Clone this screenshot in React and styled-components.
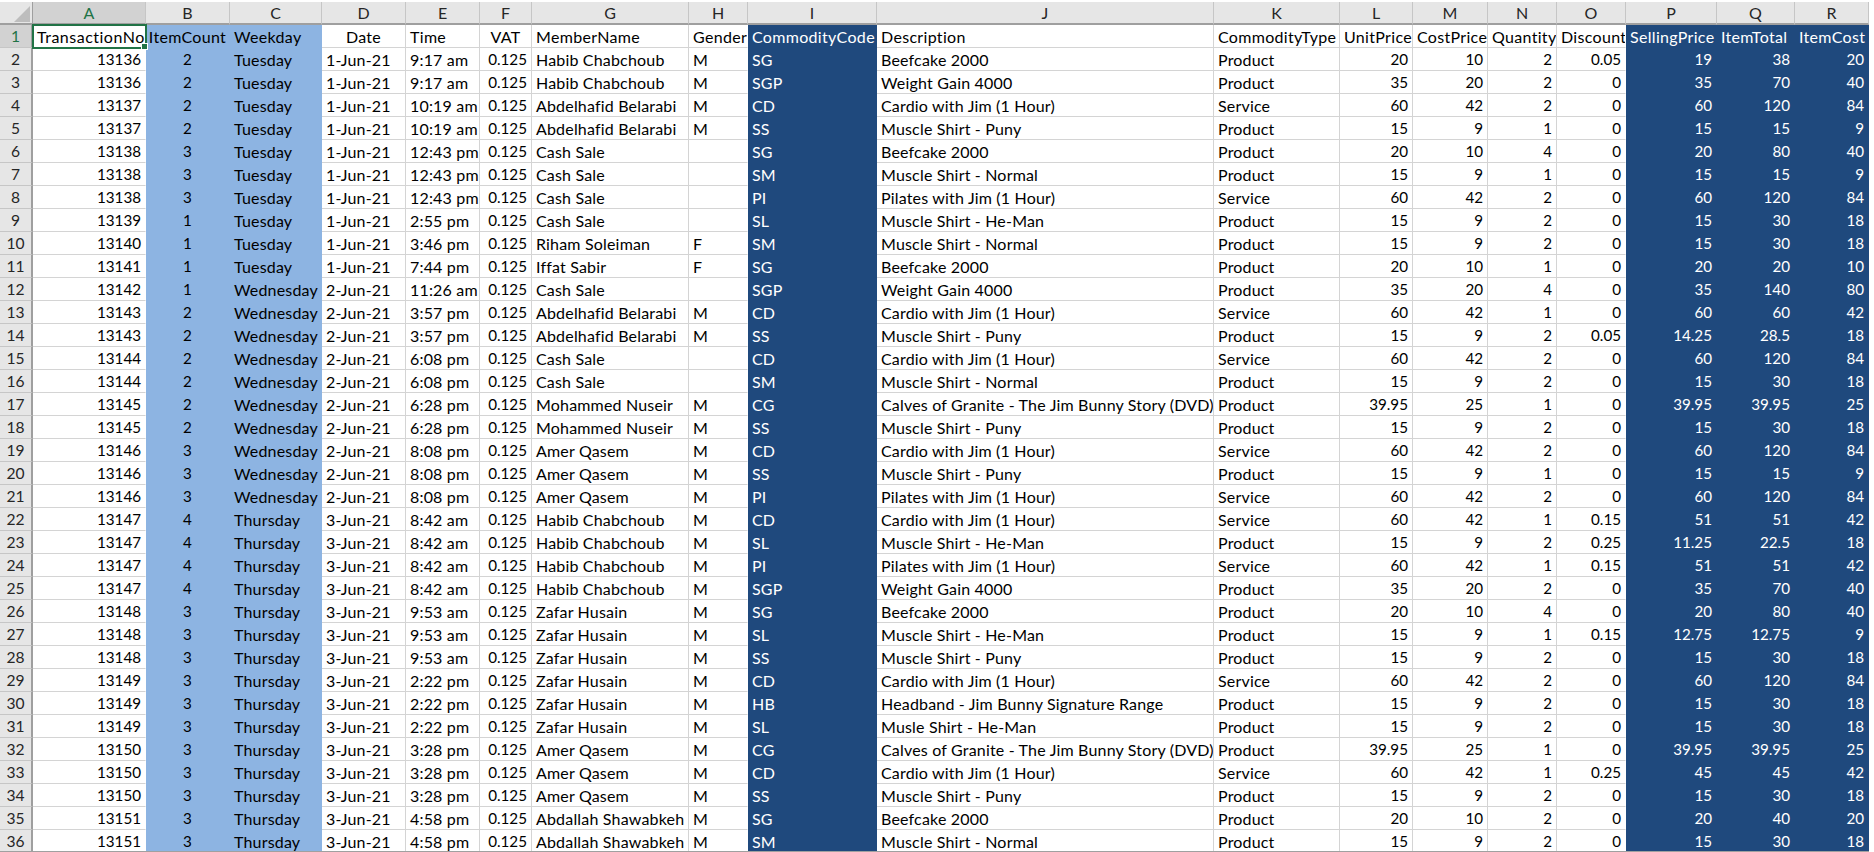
import React from "react";
import styled, { createGlobalStyle } from "styled-components";

const Global = createGlobalStyle`
  html, body { margin: 0; padding: 0; background: #fff; overflow: hidden; }
`;

const GRID = "#d4d4d4";
const DARK = "#1f497d";
const LIGHT = "#8db4e2";

const Sheet = styled.div`
  width: 1869px;
  height: 849px;
  padding-top: 2px;
  overflow: hidden;
  border-bottom: 1px solid #a0a0a0;
`;

const Table = styled.table`
  table-layout: fixed;
  border-collapse: separate;
  border-spacing: 0;
  width: 1869px;
  font-family: Lato, "Liberation Sans", sans-serif;
  font-size: 16px;
  color: #000;
`;

const ColHead = styled.th`
  height: 23px;
  padding: 0;
  box-sizing: border-box;
  font-weight: 400;
  text-align: center;
  background: ${(p) => (p.$active ? "#d2d2d2" : "#e6e6e6")};
  color: ${(p) => (p.$active ? "#217346" : "#262626")};
  border-right: 1px solid #c6c6c6;
  border-bottom: 2px solid #9f9f9f;
  font-size: 16px;
`;

const Corner = styled(ColHead)`
  background: #e6e6e6;
  border-right: 1px solid #9f9f9f;
  line-height: 0;
`;

const CornerMark = styled.svg`
  display: block;
  margin: 3px 0 0 14px;
`;

const RowHead = styled.th`
  height: 23px;
  padding: 0;
  box-sizing: border-box;
  font-weight: 400;
  font-size: 15.6px;
  text-align: center;
  background: ${(p) => (p.$active ? "#d2d2d2" : "#e6e6e6")};
  color: ${(p) => (p.$active ? "#217346" : "#262626")};
  border-right: 2px solid #9f9f9f;
  border-bottom: 1px solid #c6c6c6;
`;

const toneBg = { plain: "#fff", light: LIGHT, dark: DARK };

const Cell = styled.td`
  height: 23px;
  padding: 0 ${(p) => (p.$align === "right" ? "4px" : "0")} 0 ${(p) => (p.$align === "left" ? "4px" : "0")};
  box-sizing: border-box;
  white-space: nowrap;
  overflow: hidden;
  text-align: ${(p) => p.$align};
  font-size: ${(p) => (p.$numeric ? "15.2px" : "16px")};
  letter-spacing: ${(p) => (p.$numeric ? "0" : p.$title ? "0.32px" : "0.18px")};
  background: ${(p) => toneBg[p.$tone]};
  color: ${(p) => (p.$tone === "dark" ? "#fff" : "#000")};
  border-right: 1px solid ${(p) => (p.$tone === "plain" && !p.$noRule ? GRID : "transparent")};
  border-bottom: 1px solid ${(p) => (p.$tone === "plain" ? GRID : "transparent")};
`;

const SelectedCell = styled(Cell)`
  position: relative;
  overflow: visible;
  letter-spacing: 0.5px;
  &::before {
    content: "";
    position: absolute;
    left: -1px;
    top: -1px;
    right: -2px;
    bottom: -2px;
    border: 2px solid #217346;
    z-index: 2;
  }
  &::after {
    content: "";
    position: absolute;
    right: -3px;
    bottom: -3px;
    width: 5px;
    height: 5px;
    background: #217346;
    border: 1px solid #fff;
    z-index: 3;
  }
`;

const columns = [
  { letter: "A", name: "TransactionNo", width: 113, align: "right", headAlign: "left", tone: "plain", noRule: true },
  { letter: "B", name: "ItemCount", width: 84, align: "center", headAlign: "center", tone: "light" },
  { letter: "C", name: "Weekday", width: 92, align: "left", headAlign: "left", tone: "light" },
  { letter: "D", name: "Date", width: 84, align: "left", headAlign: "center", tone: "plain" },
  { letter: "E", name: "Time", width: 74, align: "left", headAlign: "left", tone: "plain" },
  { letter: "F", name: "VAT", width: 52, align: "right", headAlign: "center", tone: "plain" },
  { letter: "G", name: "MemberName", width: 157, align: "left", headAlign: "left", tone: "plain" },
  { letter: "H", name: "Gender", width: 59, align: "left", headAlign: "left", tone: "plain", noRule: true },
  { letter: "I", name: "CommodityCode", width: 129, align: "left", headAlign: "left", tone: "dark" },
  { letter: "J", name: "Description", width: 337, align: "left", headAlign: "left", tone: "plain" },
  { letter: "K", name: "CommodityType", width: 126, align: "left", headAlign: "left", tone: "plain" },
  { letter: "L", name: "UnitPrice", width: 73, align: "right", headAlign: "left", tone: "plain" },
  { letter: "M", name: "CostPrice", width: 75, align: "right", headAlign: "left", tone: "plain" },
  { letter: "N", name: "Quantity", width: 69, align: "right", headAlign: "left", tone: "plain" },
  { letter: "O", name: "Discount", width: 69, align: "right", headAlign: "left", tone: "plain", noRule: true },
  { letter: "P", name: "SellingPrice", width: 91, align: "right", headAlign: "left", tone: "dark" },
  { letter: "Q", name: "ItemTotal", width: 78, align: "right", headAlign: "left", tone: "dark" },
  { letter: "R", name: "ItemCost", width: 74, align: "right", headAlign: "left", tone: "dark" },
];

const DESC = {
  SG: ["Beefcake 2000", "Product"],
  SGP: ["Weight Gain 4000", "Product"],
  CD: ["Cardio with Jim (1 Hour)", "Service"],
  SS: ["Muscle Shirt - Puny", "Product"],
  SM: ["Muscle Shirt - Normal", "Product"],
  PI: ["Pilates with Jim (1 Hour)", "Service"],
  SL: ["Muscle Shirt - He-Man", "Product"],
  CG: ["Calves of Granite - The Jim Bunny Story (DVD)", "Product"],
  HB: ["Headband - Jim Bunny Signature Range", "Product"],
};

const DAYS = {
  1: ["Tuesday", "1-Jun-21"],
  2: ["Wednesday", "2-Jun-21"],
  3: ["Thursday", "3-Jun-21"],
};

// no, count, day, time, member, gender, code, unit, cost, qty, discount, selling, total, itemCost
const source = [
  [13136, 2, 1, "9:17 am", "Habib Chabchoub", "M", "SG", 20, 10, 2, 0.05, 19, 38, 20],
  [13136, 2, 1, "9:17 am", "Habib Chabchoub", "M", "SGP", 35, 20, 2, 0, 35, 70, 40],
  [13137, 2, 1, "10:19 am", "Abdelhafid Belarabi", "M", "CD", 60, 42, 2, 0, 60, 120, 84],
  [13137, 2, 1, "10:19 am", "Abdelhafid Belarabi", "M", "SS", 15, 9, 1, 0, 15, 15, 9],
  [13138, 3, 1, "12:43 pm", "Cash Sale", "", "SG", 20, 10, 4, 0, 20, 80, 40],
  [13138, 3, 1, "12:43 pm", "Cash Sale", "", "SM", 15, 9, 1, 0, 15, 15, 9],
  [13138, 3, 1, "12:43 pm", "Cash Sale", "", "PI", 60, 42, 2, 0, 60, 120, 84],
  [13139, 1, 1, "2:55 pm", "Cash Sale", "", "SL", 15, 9, 2, 0, 15, 30, 18],
  [13140, 1, 1, "3:46 pm", "Riham Soleiman", "F", "SM", 15, 9, 2, 0, 15, 30, 18],
  [13141, 1, 1, "7:44 pm", "Iffat Sabir", "F", "SG", 20, 10, 1, 0, 20, 20, 10],
  [13142, 1, 2, "11:26 am", "Cash Sale", "", "SGP", 35, 20, 4, 0, 35, 140, 80],
  [13143, 2, 2, "3:57 pm", "Abdelhafid Belarabi", "M", "CD", 60, 42, 1, 0, 60, 60, 42],
  [13143, 2, 2, "3:57 pm", "Abdelhafid Belarabi", "M", "SS", 15, 9, 2, 0.05, 14.25, 28.5, 18],
  [13144, 2, 2, "6:08 pm", "Cash Sale", "", "CD", 60, 42, 2, 0, 60, 120, 84],
  [13144, 2, 2, "6:08 pm", "Cash Sale", "", "SM", 15, 9, 2, 0, 15, 30, 18],
  [13145, 2, 2, "6:28 pm", "Mohammed Nuseir", "M", "CG", 39.95, 25, 1, 0, 39.95, 39.95, 25],
  [13145, 2, 2, "6:28 pm", "Mohammed Nuseir", "M", "SS", 15, 9, 2, 0, 15, 30, 18],
  [13146, 3, 2, "8:08 pm", "Amer Qasem", "M", "CD", 60, 42, 2, 0, 60, 120, 84],
  [13146, 3, 2, "8:08 pm", "Amer Qasem", "M", "SS", 15, 9, 1, 0, 15, 15, 9],
  [13146, 3, 2, "8:08 pm", "Amer Qasem", "M", "PI", 60, 42, 2, 0, 60, 120, 84],
  [13147, 4, 3, "8:42 am", "Habib Chabchoub", "M", "CD", 60, 42, 1, 0.15, 51, 51, 42],
  [13147, 4, 3, "8:42 am", "Habib Chabchoub", "M", "SL", 15, 9, 2, 0.25, 11.25, 22.5, 18],
  [13147, 4, 3, "8:42 am", "Habib Chabchoub", "M", "PI", 60, 42, 1, 0.15, 51, 51, 42],
  [13147, 4, 3, "8:42 am", "Habib Chabchoub", "M", "SGP", 35, 20, 2, 0, 35, 70, 40],
  [13148, 3, 3, "9:53 am", "Zafar Husain", "M", "SG", 20, 10, 4, 0, 20, 80, 40],
  [13148, 3, 3, "9:53 am", "Zafar Husain", "M", "SL", 15, 9, 1, 0.15, 12.75, 12.75, 9],
  [13148, 3, 3, "9:53 am", "Zafar Husain", "M", "SS", 15, 9, 2, 0, 15, 30, 18],
  [13149, 3, 3, "2:22 pm", "Zafar Husain", "M", "CD", 60, 42, 2, 0, 60, 120, 84],
  [13149, 3, 3, "2:22 pm", "Zafar Husain", "M", "HB", 15, 9, 2, 0, 15, 30, 18],
  [13149, 3, 3, "2:22 pm", "Zafar Husain", "M", "SL", 15, 9, 2, 0, 15, 30, 18, "Musle Shirt - He-Man"],
  [13150, 3, 3, "3:28 pm", "Amer Qasem", "M", "CG", 39.95, 25, 1, 0, 39.95, 39.95, 25],
  [13150, 3, 3, "3:28 pm", "Amer Qasem", "M", "CD", 60, 42, 1, 0.25, 45, 45, 42],
  [13150, 3, 3, "3:28 pm", "Amer Qasem", "M", "SS", 15, 9, 2, 0, 15, 30, 18],
  [13151, 3, 3, "4:58 pm", "Abdallah Shawabkeh", "M", "SG", 20, 10, 2, 0, 20, 40, 20],
  [13151, 3, 3, "4:58 pm", "Abdallah Shawabkeh", "M", "SM", 15, 9, 2, 0, 15, 30, 18],
];

const toRow = ([no, count, day, time, member, gender, code, unit, cost, qty, disc, sell, total, itemCost, descOverride]) => [
  no, count, DAYS[day][0], DAYS[day][1], time, 0.125, member, gender, code,
  descOverride || DESC[code][0], DESC[code][1], unit, cost, qty, disc, sell, total, itemCost,
];

export default function App() {
  return (
    <Sheet>
      <Global />
      <Table>
        <colgroup>
          <col width="33" />
          {columns.map((c) => (
            <col key={c.letter} width={c.width} />
          ))}
        </colgroup>
        <thead>
          <tr>
            <Corner>
              <CornerMark width="16" height="16" viewBox="0 0 16 16">
                <polygon points="0,16 16,16 16,0" fill="#bdbdbd" />
              </CornerMark>
            </Corner>
            {columns.map((c) => (
              <ColHead key={c.letter} $active={c.letter === "A"}>{c.letter}</ColHead>
            ))}
          </tr>
        </thead>
        <tbody>
          <tr>
            <RowHead $active>1</RowHead>
            {columns.map((c, i) => {
              const Comp = i === 0 ? SelectedCell : Cell;
              return (
                <Comp key={c.letter} $title $align={c.headAlign} $tone={c.tone} $noRule={c.noRule}>
                  {c.name}
                </Comp>
              );
            })}
          </tr>
          {source.map((r, idx) => (
            <tr key={idx}>
              <RowHead>{idx + 2}</RowHead>
              {toRow(r).map((v, i) => (
                <Cell
                  key={i}
                  $numeric={typeof v === "number"}
                  $align={columns[i].align}
                  $tone={columns[i].tone}
                  $noRule={columns[i].noRule}
                >
                  {v}
                </Cell>
              ))}
            </tr>
          ))}
        </tbody>
      </Table>
    </Sheet>
  );
}
